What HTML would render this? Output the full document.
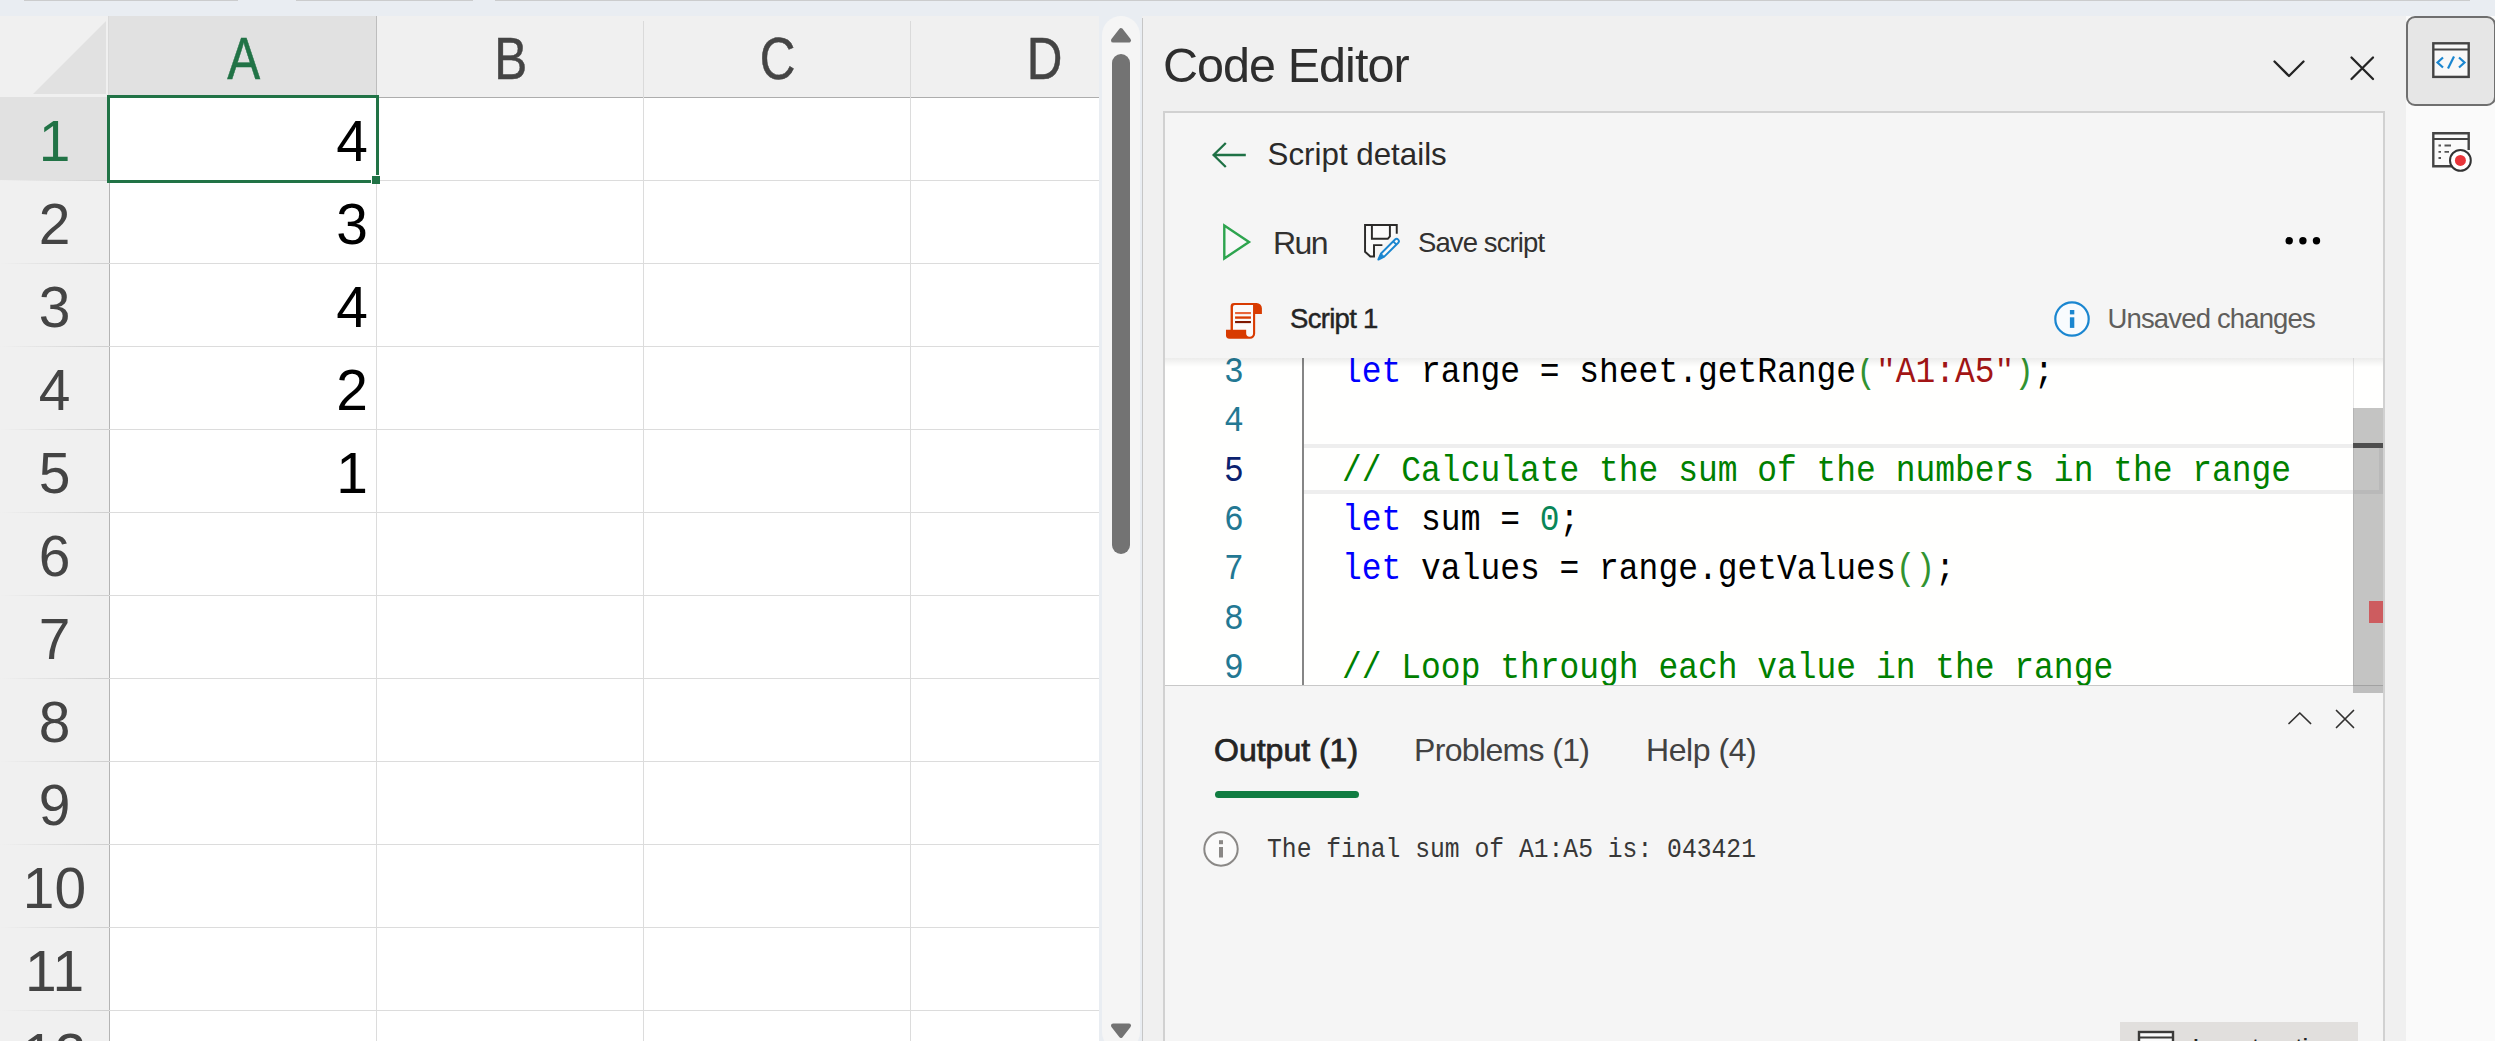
<!DOCTYPE html>
<html lang="en">
<head>
<meta charset="utf-8">
<title>Code Editor</title>
<style>
*{box-sizing:border-box;margin:0;padding:0}
html,body{width:2495px;height:1041px;overflow:hidden}
body{position:relative;background:#e9edf2;font-family:"Liberation Sans",sans-serif;color:#242424}
.abs{position:absolute}
.t{position:absolute;white-space:pre;line-height:1}
/* ---------- grid ---------- */
#grid{position:absolute;left:0;top:16px;width:1098.8px;height:1025px;background:#fff;overflow:hidden}
.vl{position:absolute;width:1px;background:#dcdcdc;top:81px;bottom:0}
.hl{position:absolute;height:1px;background:#dcdcdc;left:109px;right:0}
#colhdr{position:absolute;left:0;top:0;width:1100px;height:81px;background:#f0f0f0}
#rowhdr{position:absolute;left:0;top:81px;width:109px;height:944px;background:#f0f0f0}
.ch{position:absolute;top:0;height:81px;width:267px;text-align:center;font-size:59.5px;line-height:84px;color:#444}
.ch span{display:inline-block;transform:translate(1px,.8px) scaleX(.83);-webkit-text-stroke:.5px currentColor}
.rh{position:absolute;left:0;width:109px;height:83px;text-align:center;font-size:56.9px;line-height:88.4px;color:#444}
.cv{position:absolute;left:110px;width:258px;height:83px;text-align:right;font-size:56.9px;line-height:88.4px;color:#000}
/* ---------- panel ---------- */
#panel{position:absolute;left:1142px;top:16px;width:1264px;height:1025px;background:#f0f0f0}
#inner{position:absolute;left:1163px;top:111px;width:1222px;height:940px;background:#f5f5f5;border:2px solid #d1d1d1}
#code{position:absolute;left:1165px;top:358px;width:1218px;height:327px;background:#fffffe;overflow:hidden}
.ln{position:absolute;left:0;width:78.7px;text-align:right;transform:scaleX(.9153);transform-origin:right center;font-family:"Liberation Mono",monospace;font-size:36px;line-height:49.4px;color:#237893;white-space:pre}
.cl{position:absolute;left:177px;transform:scaleX(.9153);transform-origin:left center;font-family:"Liberation Mono",monospace;font-size:36px;line-height:49.4px;color:#000;white-space:pre}
.kw{color:#0000ff}.cm{color:#008000}.st{color:#a31515}.nu{color:#098658}.br{color:#319331}
#rail{position:absolute;left:2406px;top:16px;width:89px;height:1025px;background:#fafafa}
</style>
</head>
<body>
<!-- top strip line -->
<div class="abs" style="left:24px;top:0;width:214px;height:1px;background:#cbcccd"></div>
<div class="abs" style="left:296px;top:0;width:177px;height:1px;background:#cbcccd"></div>
<div class="abs" style="left:495px;top:0;width:1975px;height:1px;background:#cbcccd"></div>

<!-- ================= GRID ================= -->
<div id="grid">
  <div id="colhdr">
    <svg class="abs" style="left:0;top:0" width="109" height="81"><polygon points="33,78 106,78 106,5" fill="#e1e1e1"/></svg>
    <div class="ch" style="left:109px;background:#e1e1e1;color:#217346"><span>A</span></div>
    <div class="ch" style="left:376px"><span>B</span></div>
    <div class="ch" style="left:643px"><span>C</span></div>
    <div class="ch" style="left:910px"><span>D</span></div>
    <div class="abs" style="left:108px;top:0;width:1px;height:81px;background:#dadada"></div>
    <div class="abs" style="left:376px;top:0;width:1px;height:81px;background:#bdbdbd"></div>
    <div class="abs" style="left:643px;top:5px;width:1px;height:76px;background:#dadada"></div>
    <div class="abs" style="left:910px;top:5px;width:1px;height:76px;background:#dadada"></div>
    <div class="abs" style="left:0;top:81px;width:1100px;height:1px;background:#adadad"></div>
  </div>
  <div id="rowhdr">
    <div class="abs" style="left:0;top:0;width:109px;height:83px;background:#e1e1e1"></div>
  </div>
  <div class="abs" style="left:0;top:164px;width:109px;height:1px;background:linear-gradient(to right,rgba(200,200,200,0),#cfcfcf)"></div>
  <div class="abs" style="left:0;top:247px;width:109px;height:1px;background:linear-gradient(to right,rgba(200,200,200,0),#cfcfcf)"></div>
  <div class="abs" style="left:0;top:330px;width:109px;height:1px;background:linear-gradient(to right,rgba(200,200,200,0),#cfcfcf)"></div>
  <div class="abs" style="left:0;top:413px;width:109px;height:1px;background:linear-gradient(to right,rgba(200,200,200,0),#cfcfcf)"></div>
  <div class="abs" style="left:0;top:496px;width:109px;height:1px;background:linear-gradient(to right,rgba(200,200,200,0),#cfcfcf)"></div>
  <div class="abs" style="left:0;top:579px;width:109px;height:1px;background:linear-gradient(to right,rgba(200,200,200,0),#cfcfcf)"></div>
  <div class="abs" style="left:0;top:662px;width:109px;height:1px;background:linear-gradient(to right,rgba(200,200,200,0),#cfcfcf)"></div>
  <div class="abs" style="left:0;top:745px;width:109px;height:1px;background:linear-gradient(to right,rgba(200,200,200,0),#cfcfcf)"></div>
  <div class="abs" style="left:0;top:828px;width:109px;height:1px;background:linear-gradient(to right,rgba(200,200,200,0),#cfcfcf)"></div>
  <div class="abs" style="left:0;top:911px;width:109px;height:1px;background:linear-gradient(to right,rgba(200,200,200,0),#cfcfcf)"></div>
  <div class="abs" style="left:0;top:994px;width:109px;height:1px;background:linear-gradient(to right,rgba(200,200,200,0),#cfcfcf)"></div>
  <div class="rh" style="top:81px;color:#217346">1</div>
  <div class="rh" style="top:164px">2</div>
  <div class="rh" style="top:247px">3</div>
  <div class="rh" style="top:330px">4</div>
  <div class="rh" style="top:413px">5</div>
  <div class="rh" style="top:496px">6</div>
  <div class="rh" style="top:579px">7</div>
  <div class="rh" style="top:662px">8</div>
  <div class="rh" style="top:745px">9</div>
  <div class="rh" style="top:828px">10</div>
  <div class="rh" style="top:911px">11</div>
  <div class="rh" style="top:994px">12</div>
  <div class="abs" style="left:109px;top:81px;width:1px;height:944px;background:#b4b4b4"></div>
  <!-- grid lines -->
  <div class="vl" style="left:376px"></div>
  <div class="vl" style="left:643px"></div>
  <div class="vl" style="left:910px"></div>
  <div class="hl" style="top:164px"></div>
  <div class="hl" style="top:247px"></div>
  <div class="hl" style="top:330px"></div>
  <div class="hl" style="top:413px"></div>
  <div class="hl" style="top:496px"></div>
  <div class="hl" style="top:579px"></div>
  <div class="hl" style="top:662px"></div>
  <div class="hl" style="top:745px"></div>
  <div class="hl" style="top:828px"></div>
  <div class="hl" style="top:911px"></div>
  <div class="hl" style="top:994px"></div>
  <!-- values -->
  <div class="cv" style="top:81px">4</div>
  <div class="cv" style="top:164px">3</div>
  <div class="cv" style="top:247px">4</div>
  <div class="cv" style="top:330px">2</div>
  <div class="cv" style="top:413px">1</div>
  <!-- selection -->
  <div class="abs" style="left:107px;top:79px;width:272px;height:88px;border:3px solid #217346"></div>
  <div class="abs" style="left:370.6px;top:158.6px;width:9.4px;height:9.4px;background:#217346;border-left:1.4px solid #fff;border-top:1.4px solid #fff"></div>
</div>

<!-- ================= SCROLLBAR ================= -->
<div class="abs" style="left:1102px;top:16px;width:38px;height:1035px;background:#f5f5f5;border-radius:19px"></div>
<div class="abs" style="left:1112px;top:54px;width:18px;height:500px;background:#737373;border-radius:9px"></div>
<svg class="abs" style="left:1106px;top:24px" width="30" height="24"><path d="M15 6.3 L22.8 16.4 L7.2 16.4 Z" fill="#737373" stroke="#737373" stroke-width="4.4" stroke-linejoin="round"/></svg>
<svg class="abs" style="left:1106px;top:1018px" width="30" height="24"><path d="M15 17.7 L22.8 7.6 L7.2 7.6 Z" fill="#737373" stroke="#737373" stroke-width="4.4" stroke-linejoin="round"/></svg>

<!-- ================= PANEL ================= -->
<div id="panel"></div>
<div class="abs" style="left:1142px;top:18px;width:1px;height:1023px;background:#c6c6c6"></div>
<div id="inner"></div>
<div id="rail"></div>

<!-- title -->
<div class="t" id="t_title" style="left:1163px;top:41px;font-size:48.5px;color:#2e2e2e;letter-spacing:-.95px">Code Editor</div>
<svg class="abs" style="left:2268px;top:52px" width="42" height="34"><path d="M6.5 9.5 L21 24 L35.5 9.5" fill="none" stroke="#242424" stroke-width="2.3" stroke-linecap="round" stroke-linejoin="round"/></svg>
<svg class="abs" style="left:2346px;top:52px" width="32" height="32"><path d="M5.5 5.5 L27 27 M27 5.5 L5.5 27" fill="none" stroke="#242424" stroke-width="2.3" stroke-linecap="round"/></svg>

<!-- script details -->
<svg class="abs" style="left:1208px;top:138px" width="44" height="34"><path d="M37.8 17 L5.5 17 M17.8 5 L5.6 17 L17.8 29" fill="none" stroke="#1e7145" stroke-width="2.3" stroke-linecap="butt" stroke-linejoin="miter"/></svg>
<div class="t" id="t_details" style="left:1267.6px;top:138.9px;font-size:31.3px;color:#2b2a29;letter-spacing:0px">Script details</div>

<!-- toolbar -->
<svg class="abs" style="left:1218px;top:220px" width="38" height="46"><path d="M6.3 5.5 L31 22 L6.3 38.5 Z" fill="#f8f8f8" stroke="#2da44e" stroke-width="2.4" stroke-linejoin="miter"/></svg>
<div class="t" id="t_run" style="left:1273px;top:227px;font-size:32px;color:#323130;letter-spacing:-1.6px">Run</div>
<svg class="abs" style="left:1360px;top:220px" width="46" height="46" viewBox="0 0 46 46">
  <path d="M36.75 13.5 V5.04 H5.05 V31.7 L10.3 36.5 H14 V25.1 H22.4 L36.75 13.5 Z" fill="#fafafa" stroke="none"/>
  <path d="M36.75 13.7 V5.04 H5.05 V31.7 L10.3 36.5 H14 V25.1 H22.4" fill="none" stroke="#2b2a29" stroke-width="1.95" stroke-linejoin="miter"/>
  <path d="M11.9 5 V18.8 H27.8 L29.9 16.4 V5" fill="none" stroke="#2b2a29" stroke-width="1.95" stroke-linejoin="miter"/>
  <path d="M21.06 33.46 L35.06 19.56 A2.25 2.25 0 0 1 38.24 22.74 L24.24 36.64 L18.4 39.5 Z" fill="#fafafa" stroke="#1a86d0" stroke-width="1.95" stroke-linejoin="round"/>
  <path d="M21.06 33.46 L24.24 36.64 L18.4 39.5 Z" fill="#1a86d0" stroke="#1a86d0" stroke-width="1" stroke-linejoin="round"/>
  <path d="M33.2 21.4 L36.4 24.6" stroke="#1a86d0" stroke-width="1.9"/>
</svg>
<div class="t" id="t_save" style="left:1418px;top:229px;font-size:27.5px;color:#323130;letter-spacing:-.9px">Save script</div>
<svg class="abs" style="left:2280px;top:230px" width="46" height="22"><circle cx="9.2" cy="10.8" r="3.7" fill="#000"/><circle cx="22.9" cy="10.8" r="3.7" fill="#000"/><circle cx="36.5" cy="10.8" r="3.7" fill="#000"/></svg>

<!-- script name row -->
<svg class="abs" style="left:1222px;top:300px" width="44" height="42" viewBox="0 0 44 42">
  <path d="M8.58 29.86 V6.3 A3.4 3.4 0 0 1 11.98 2.92 H34.6 A5.3 5.3 0 0 1 39.9 8.2 V13.91 H33.15 V33.6 A5.1 5.1 0 0 1 28.05 38.74 H7.4 A3.4 3.4 0 0 1 3.99 35.3 V29.86 Z" fill="#d83b01"/>
  <path d="M10.96 29.86 V7 A2 2 0 0 1 12.96 5.03 H31.04 V33.3 A3.435 3.435 0 0 1 24.17 33.3 V29.86 Z" fill="#fbfafa"/>
  <rect x="13.07" y="12" width="15.85" height="2.12" fill="#e8653a"/>
  <rect x="13.07" y="16.4" width="15.85" height="2.35" fill="#d83b01"/>
  <rect x="13.07" y="21" width="15.85" height="2.12" fill="#7f1700"/>
</svg>
<div class="t" id="t_name" style="left:1290px;top:305px;font-size:27.5px;color:#242424;-webkit-text-stroke:.45px #242424;letter-spacing:-.7px">Script 1</div>
<svg class="abs" style="left:2052px;top:299px" width="40" height="40"><circle cx="20" cy="20" r="16.7" fill="#f8fbfe" stroke="#1a86d0" stroke-width="2.2"/><rect x="17.9" y="11" width="4.4" height="4.4" fill="#1a86d0"/><rect x="17.9" y="18.3" width="4.4" height="10.6" fill="#1a86d0"/></svg>
<div class="t" id="t_unsaved" style="left:2107.5px;top:304.7px;font-size:27.5px;color:#605e5c;letter-spacing:-.85px">Unsaved changes</div>

<!-- code -->
<div id="code">
  <div class="abs" style="left:139px;top:86px;width:1079px;height:50.4px;border:4px solid #eeeeee;border-left:none"></div>
  <div class="abs" style="left:137px;top:0;width:2px;height:328px;background:#868686"></div>
  <div class="ln" style="top:-10.2px">3</div>
  <div class="ln" style="top:39.2px">4</div>
  <div class="ln" style="top:88.6px;color:#0b216f">5</div>
  <div class="ln" style="top:138.0px">6</div>
  <div class="ln" style="top:187.4px">7</div>
  <div class="ln" style="top:236.8px">8</div>
  <div class="ln" style="top:286.2px">9</div>
  <div class="cl" style="top:-10.2px"><span class="kw">let</span> range = sheet.getRange<span class="br">(</span><span class="st">"A1:A5"</span><span class="br">)</span>;</div>
  <div class="cl" style="top:88.6px"><span class="cm">// Calculate the sum of the numbers in the range</span></div>
  <div class="cl" style="top:138.0px"><span class="kw">let</span> sum = <span class="nu">0</span>;</div>
  <div class="cl" style="top:187.4px"><span class="kw">let</span> values = range.getValues<span class="br">()</span>;</div>
  <div class="cl" style="top:286.2px"><span class="cm">// Loop through each value in the range</span></div>
  <div class="abs" style="left:1188px;top:0;width:1px;height:328px;background:#e6e6e6"></div>
  <div class="abs" style="left:0;top:0;width:1218px;height:9px;background:linear-gradient(to bottom,rgba(0,0,0,.075),rgba(0,0,0,0))"></div>
</div>
<div class="abs" style="left:1165px;top:685px;width:1218px;height:1px;background:#c8c8c8"></div>
<!-- overview / slider -->
<div class="abs" style="left:2353px;top:443px;width:30px;height:5px;background:#424242"></div>
<div class="abs" style="left:2353px;top:408px;width:30px;height:285px;background:rgba(100,100,100,.38)"></div>
<div class="abs" style="left:2369px;top:601px;width:14px;height:22px;background:#cd5c5f"></div>

<!-- output panel -->
<svg class="abs" style="left:2284px;top:706px" width="32" height="24"><path d="M5 17.5 L15.8 7 L26.6 17.5" fill="none" stroke="#323130" stroke-width="1.7" stroke-linecap="round" stroke-linejoin="round"/></svg>
<svg class="abs" style="left:2332px;top:706px" width="26" height="26"><path d="M4.5 4.5 L21.5 21.5 M21.5 4.5 L4.5 21.5" fill="none" stroke="#323130" stroke-width="1.7" stroke-linecap="round"/></svg>
<div class="t" id="t_out" style="left:1214px;top:733.5px;font-size:32px;color:#242424;letter-spacing:0px;-webkit-text-stroke:.75px #242424">Output (1)</div>
<div class="t" id="t_prob" style="left:1414px;top:733.5px;font-size:32px;color:#424242;letter-spacing:-.65px">Problems (1)</div>
<div class="t" id="t_help" style="left:1646px;top:733.5px;font-size:32px;color:#424242;letter-spacing:-.44px">Help (4)</div>
<div class="abs" style="left:1215px;top:791px;width:144px;height:7px;border-radius:3.5px;background:#107c41"></div>
<svg class="abs" style="left:1201px;top:829px" width="40" height="40"><circle cx="20" cy="20" r="16.7" fill="#fafafa" stroke="#8a8886" stroke-width="2"/><rect x="18" y="11.2" width="4" height="4" fill="#8a8886"/><rect x="18" y="18" width="4" height="10.5" fill="#8a8886"/></svg>
<div class="t" id="t_msg" style="left:1266.5px;top:836.5px;font-family:'Liberation Mono',monospace;font-size:27px;color:#383838;transform:scaleX(.9145);transform-origin:left center">The final sum of A1:A5 is: 043421</div>

<!-- insert action button (cut off) -->
<div class="abs" style="left:2120px;top:1022px;width:238px;height:40px;background:#e1dfdd"></div>
<svg class="abs" style="left:2136px;top:1029px" width="40" height="20"><rect x="3" y="3" width="34" height="30" fill="#fafafa" stroke="#3b3a39" stroke-width="2.4"/><path d="M3 8.5 H37" stroke="#3b3a39" stroke-width="2"/></svg>
<div class="t" id="t_insert" style="left:2192px;top:1035px;font-size:28px;color:#242424;letter-spacing:-.5px">Insert action</div>

<div class="abs" style="left:2406px;top:16px;width:90px;height:89.5px;background:#e6e6e6;border:2px solid #6f6f6f;border-radius:9px"></div>
<svg class="abs" style="left:2428px;top:38px" width="46" height="44" viewBox="0 0 46 44">
  <rect x="5.3" y="5.3" width="35.4" height="33.6" fill="#f8f8f8" stroke="#444" stroke-width="2.4"/>
  <path d="M5.3 11.5 H40.7" stroke="#444" stroke-width="2.2"/>
  <path d="M15 19.5 L9.5 24.5 L15 29.5 M31 19.5 L36.5 24.5 L31 29.5 M26 18.5 L20 30.5" fill="none" stroke="#1a86d0" stroke-width="2.2"/>
</svg>
<svg class="abs" style="left:2428px;top:128px" width="50" height="48" viewBox="0 0 50 48">
  <path d="M24 38.2 H5.3 V5.3 H40.7 V22" fill="#fafafa" stroke="#444" stroke-width="2.4"/>
  <path d="M5.3 11 H40.7" stroke="#444" stroke-width="2.2"/>
  <path d="M10.5 17.5 h2.5 M16.5 17.5 h6.5 M10.5 23.8 h2.5 M16.5 23.8 h4.5 M10.5 30 h2.5" stroke="#555" stroke-width="1.8"/>
  <circle cx="32.4" cy="32.4" r="10.4" fill="#fff" stroke="#333" stroke-width="2"/>
  <circle cx="32.4" cy="32.4" r="5.5" fill="#e8353a"/>
</svg>

</body>
</html>
